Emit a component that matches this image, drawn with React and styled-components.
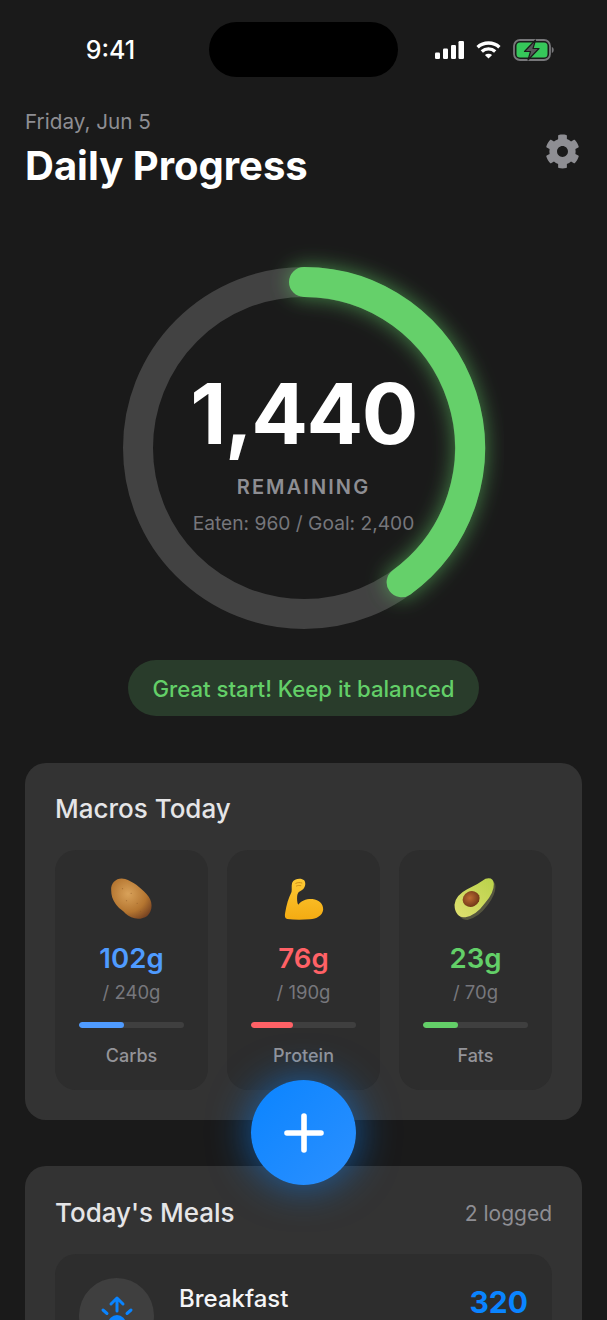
import React from 'react';
import styled, { createGlobalStyle } from 'styled-components';
import { FaCog } from 'react-icons/fa';

const GlobalStyle = createGlobalStyle`
  html, body {
    margin: 0;
    padding: 0;
    background: #1a1a1a;
    overflow: hidden;
  }
  * { box-sizing: border-box; }
`;

const Screen = styled.div`
  position: relative;
  width: 607px;
  height: 1320px;
  overflow: hidden;
  background: #1a1a1a;
  color: #fff;
  font-family: Inter, "Liberation Sans", sans-serif;
`;

const StatusBar = styled.div`
  display: grid;
  grid-template-columns: 209px 189px 209px;
  align-items: center;
  height: 55px;
  margin-top: 22px;
`;

const Time = styled.div`
  text-align: center;
  font-size: 25px;
  font-weight: 500;
  padding-left: 12px;
  padding-top: 1px;
`;

const Island = styled.div`
  height: 55px;
  border-radius: 28px;
  background: #000;
`;

const StatusIcons = styled.div`
  display: flex;
  align-items: center;
  padding-left: 37px;
  gap: 12px;
  height: 55px;
`;

const Header = styled.header`
  display: flex;
  justify-content: space-between;
  align-items: flex-end;
  padding: 0 25px;
  margin-top: 31px;
`;

const DateLine = styled.div`
  font-size: 20.7px;
  line-height: 28px;
  color: #8e8e93;
`;

const Title = styled.h1`
  margin: 6px 0 0;
  font-size: 40px;
  line-height: 48px;
  font-weight: 700;
`;

const SettingsIcon = styled(FaCog)`
  width: 35px;
  height: 35px;
  color: #8e8e93;
  margin-bottom: 21px;
  margin-right: 2px;
`;

const Ring = styled.div`
  display: grid;
  width: 420px;
  height: 420px;
  margin: 48px auto 0;
  justify-items: center;
  align-items: center;
  & > * { grid-area: 1 / 1; }
`;

const RingCenter = styled.div`
  display: flex;
  flex-direction: column;
  align-items: center;
  padding-top: 11px;
`;

const Remaining = styled.div`
  font-size: 84px;
  line-height: 84px;
  font-weight: 700;
  letter-spacing: -1.6px;
`;

const RemainingLabel = styled.div`
  margin-top: 18px;
  font-size: 20px;
  line-height: 26px;
  font-weight: 600;
  letter-spacing: 2.1px;
  color: #8e8e93;
`;

const EatenLine = styled.div`
  margin-top: 11px;
  font-size: 19.2px;
  line-height: 24px;
  color: #76767b;
`;

const Pill = styled.div`
  width: 351px;
  height: 56px;
  margin: 2px auto 0;
  display: flex;
  align-items: center;
  justify-content: center;
  border-radius: 28px;
  background: #293c2b;
  color: #63cf68;
  font-size: 22.2px;
  font-weight: 500;
`;

const Card = styled.section`
  margin: ${(p) => p.$top}px 25px 0;
  padding: ${(p) => p.$pad}px 30px 30px;
  border-radius: 21px;
  background: #333333;
`;

const CardHead = styled.div`
  display: flex;
  justify-content: space-between;
  align-items: center;
  height: 32px;
`;

const CardTitle = styled.h2`
  margin: 0;
  font-size: 26px;
  line-height: 32px;
  font-weight: 500;
  color: #e5e5e7;
`;

const CardNote = styled.span`
  font-size: 21px;
  color: #8e8e93;
`;

const MacroGrid = styled.div`
  display: grid;
  grid-template-columns: repeat(3, 153px);
  gap: 19px;
  margin-top: 25px;
`;

const MacroTile = styled.div`
  height: 240px;
  padding-top: 25px;
  border-radius: 21px;
  background: #2d2d2d;
  display: flex;
  flex-direction: column;
  align-items: center;
`;

const EmojiArt = styled.svg`
  width: 46px;
  height: 46px;
  display: block;
`;

const MacroValue = styled.div`
  margin-top: 20px;
  font-size: 27.6px;
  line-height: 34px;
  font-weight: 600;
  color: ${(p) => p.$color};
`;

const MacroGoal = styled.div`
  margin-top: 5px;
  font-size: 18.5px;
  line-height: 24px;
  color: #77777c;
`;

const Track = styled.div`
  width: 105px;
  height: 6px;
  margin-top: 18px;
  border-radius: 3px;
  background: #3f3f3f;
  overflow: hidden;
`;

const Fill = styled.div`
  height: 100%;
  border-radius: 3px;
  background: ${(p) => p.$color};
`;

const MacroName = styled.div`
  margin-top: 16px;
  font-size: 18px;
  line-height: 24px;
  font-weight: 500;
  color: #949499;
`;

const MealRow = styled.div`
  display: flex;
  align-items: flex-start;
  margin-top: 25px;
  padding: 24px;
  height: 130px;
  border-radius: 21px;
  background: #2d2d2d;
`;

const MealAvatar = styled.div`
  width: 75px;
  height: 75px;
  border-radius: 50%;
  background: #3f3f3f;
  display: flex;
  justify-content: center;
  padding-top: 17px;
  flex: none;
`;

const MealName = styled.div`
  margin-left: 25px;
  flex: 1;
  font-size: 24px;
  line-height: 30px;
  font-weight: 500;
  color: #f5f5f7;
  margin-top: 6px;
`;

const MealCalories = styled.div`
  font-size: 30px;
  line-height: 38px;
  font-weight: 700;
  color: #0a84ff;
  margin-top: 5px;
`;

const Fab = styled.button`
  position: absolute;
  left: 251px;
  top: 1080px;
  width: 105px;
  height: 105px;
  padding: 0;
  border: 0;
  border-radius: 50%;
  background: linear-gradient(135deg, #0a84ff, #2c90ff);
  box-shadow: 0 0 42px rgba(10, 132, 255, 0.6);
  display: flex;
  align-items: center;
  justify-content: center;
`;

const SignalIcon = () => (
  <svg width="29" height="18" viewBox="0 0 29 18" fill="#fff">
    <rect x="0" y="11.5" width="5" height="6.5" rx="1.2" />
    <rect x="8" y="7.5" width="5" height="10.5" rx="1.2" />
    <rect x="16" y="4" width="5" height="14" rx="1.2" />
    <rect x="23.5" y="0" width="5.5" height="18" rx="1.2" />
  </svg>
);

const WifiIcon = () => (
  <svg width="25" height="18" viewBox="0 0 25 18" fill="none" stroke="#fff" strokeWidth="3.4">
    <path d="M1.6 6.2C7.6 .6 17.4 .6 23.4 6.2" />
    <path d="M5.8 10.4C9.6 7 15.4 7 19.2 10.4" />
    <path d="M12.5 17.6L8.9 14C11 12.3 14 12.3 16.1 14Z" fill="#fff" stroke="none" />
  </svg>
);

const BatteryIcon = () => (
  <svg width="41" height="22" viewBox="0 0 41 22">
    <rect x="1" y="1" width="36" height="20" rx="6" fill="none" stroke="#77777a" strokeWidth="1.8" />
    <rect x="3.5" y="3.5" width="31" height="15" rx="3.5" fill="#36c75a" />
    <path d="M38.8 8c1.4.4 1.9 1.6 1.9 3s-.5 2.6-1.9 3z" fill="#77777a" />
    <path d="M22.5 1 11.5 12.5h6L15 21l11-11.5h-6z" fill="#58585b" stroke="#1a1a1a" strokeWidth="1.2" strokeLinejoin="round" />
  </svg>
);

const ProgressRing = () => (
  <svg width="420" height="420" viewBox="0 0 420 420" fill="none">
    <defs>
      <filter id="ringGlow" x="-20%" y="-20%" width="140%" height="140%">
        <feGaussianBlur stdDeviation="10" />
      </filter>
    </defs>
    <circle cx="210" cy="210" r="166" stroke="#424242" strokeWidth="30" />
    <path d="M210 44A166 166 0 0 1 307.6 344.3" stroke="#63cf68" strokeOpacity="0.55" strokeWidth="32" strokeLinecap="round" filter="url(#ringGlow)" />
    <path d="M210 44A166 166 0 0 1 307.6 344.3" stroke="#65d06a" strokeWidth="30" strokeLinecap="round" />
  </svg>
);

const PotatoArt = () => (
  <EmojiArt viewBox="55.5 15 138 138">
    <defs>
      <radialGradient id="potato" cx="42%" cy="38%" r="70%">
        <stop offset="0%" stopColor="#d9a25a" />
        <stop offset="65%" stopColor="#b47530" />
        <stop offset="100%" stopColor="#7a4522" />
      </radialGradient>
    </defs>
    <path d="M62 60C60 36 82 20 104 27C126 34 150 52 168 72C188 92 188 122 170 138C150 152 122 148 104 130C96 120 84 116 74 100C66 88 62 76 62 60Z" fill="url(#potato)" />
    <g fill="#8f5a28" opacity="0.55">
      <circle cx="96" cy="56" r="2" />
      <circle cx="122" cy="70" r="2" />
      <circle cx="108" cy="92" r="2" />
      <circle cx="140" cy="100" r="2" />
      <circle cx="150" cy="124" r="2" />
    </g>
  </EmojiArt>
);

const BicepArt = () => (
  <EmojiArt viewBox="61.5 15 138 138">
    <defs>
      <linearGradient id="bicep" x1="0" y1="0" x2="0" y2="1">
        <stop offset="0%" stopColor="#fdca35" />
        <stop offset="100%" stopColor="#f4ab12" />
      </linearGradient>
    </defs>
    <path d="M95 38C100 26 122 22 131 31C138 40 134 58 120 63C114 65 111 70 110 78C109 88 110 98 113 104C122 92 138 86 156 87C176 89 189 103 188 119C186 137 168 146 148 148C124 150 100 150 80 147C73 145 72 138 74 128C78 104 84 84 93 66C95 56 92 48 95 38Z" fill="url(#bicep)" />
    <path d="M106 40C112 37 118 37 124 39M108 48C112 46 116 46 121 47" fill="none" stroke="#cf8f18" strokeWidth="3" strokeLinecap="round" />
  </EmojiArt>
);

const AvocadoArt = () => (
  <EmojiArt viewBox="52.5 15 138 138">
    <defs>
      <linearGradient id="avocadoFlesh" x1="1" y1="0" x2="0" y2="1">
        <stop offset="0%" stopColor="#b9d24a" />
        <stop offset="100%" stopColor="#e0e070" />
      </linearGradient>
      <radialGradient id="avocadoPit" cx="45%" cy="40%" r="65%">
        <stop offset="0%" stopColor="#bd6c33" />
        <stop offset="100%" stopColor="#6a3315" />
      </radialGradient>
    </defs>
    <path d="M158 34Q180 30 180 50Q180 74 156 106Q130 142 96 150Q68 150 66 114Q68 88 102 70Q132 54 158 34Z" fill="#55553f" />
    <path d="M150 26Q174 20 175 42Q176 68 148 100Q122 136 90 142Q58 142 57 104Q60 76 95 58Q125 44 150 26Z" fill="url(#avocadoFlesh)" />
    <ellipse cx="107" cy="87" rx="26" ry="23" transform="rotate(-25 107 87)" fill="url(#avocadoPit)" />
  </EmojiArt>
);

const SunriseIcon = () => (
  <svg width="40" height="48" viewBox="0 0 40 48" fill="none" stroke="#0a84ff" strokeWidth="3" strokeLinecap="round" strokeLinejoin="round">
    <path d="M20 16V3M14 9l6-6 6 6" />
    <path d="M6 15l4 3.5M34 15l-4 3.5" />
    <circle cx="20" cy="29" r="9" fill="#0a84ff" stroke="none" />
  </svg>
);

const macros = [
  { name: 'Carbs', value: '102g', goal: '/ 240g', color: '#4f9bff', pct: 42.5, Art: PotatoArt },
  { name: 'Protein', value: '76g', goal: '/ 190g', color: '#ff6166', pct: 40, Art: BicepArt },
  { name: 'Fats', value: '23g', goal: '/ 70g', color: '#63cf68', pct: 33, Art: AvocadoArt },
];

const App = () => (
  <Screen>
    <GlobalStyle />
    <StatusBar>
      <Time>9:41</Time>
      <Island />
      <StatusIcons>
        <SignalIcon />
        <WifiIcon />
        <BatteryIcon />
      </StatusIcons>
    </StatusBar>

    <Header>
      <div>
        <DateLine>Friday, Jun 5</DateLine>
        <Title>Daily Progress</Title>
      </div>
      <SettingsIcon />
    </Header>

    <Ring>
      <ProgressRing />
      <RingCenter>
        <Remaining>1,440</Remaining>
        <RemainingLabel>REMAINING</RemainingLabel>
        <EatenLine>Eaten: 960 / Goal: 2,400</EatenLine>
      </RingCenter>
    </Ring>

    <Pill>Great start! Keep it balanced</Pill>

    <Card $top={47} $pad={30}>
      <CardHead>
        <CardTitle>Macros Today</CardTitle>
      </CardHead>
      <MacroGrid>
        {macros.map(({ name, value, goal, color, pct, Art }) => (
          <MacroTile key={name}>
            <Art />
            <MacroValue $color={color}>{value}</MacroValue>
            <MacroGoal>{goal}</MacroGoal>
            <Track>
              <Fill $color={color} style={{ width: `${pct}%` }} />
            </Track>
            <MacroName>{name}</MacroName>
          </MacroTile>
        ))}
      </MacroGrid>
    </Card>

    <Card $top={46} $pad={31}>
      <CardHead>
        <CardTitle>Today's Meals</CardTitle>
        <CardNote>2 logged</CardNote>
      </CardHead>
      <MealRow>
        <MealAvatar>
          <SunriseIcon />
        </MealAvatar>
        <MealName>Breakfast</MealName>
        <MealCalories>320</MealCalories>
      </MealRow>
    </Card>

    <Fab aria-label="Add">
      <svg width="40" height="40" viewBox="0 0 40 40" stroke="#fff" strokeWidth="5.6" strokeLinecap="round">
        <path d="M20 3v34M3 20h34" />
      </svg>
    </Fab>
  </Screen>
);

export default App;
